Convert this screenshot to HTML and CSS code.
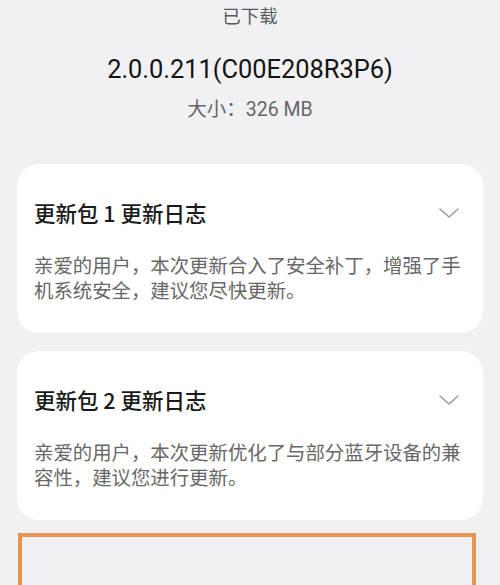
FILE: index.html
```html
<!DOCTYPE html>
<html lang="zh-CN">
<head>
<meta charset="utf-8">
<link rel="stylesheet" href="styles.css">
</head>
<body>
<div class="page">
  <div class="status">已下载</div>
  <div class="version">2.0.0.211(C00E208R3P6)</div>
  <div class="size">大小：326 MB</div>

  <div class="card">
    <div class="card-head">
      <span class="card-title">更新包 1 更新日志</span>
      <svg class="chev" width="20" height="10" viewBox="0 0 20 10"><path d="M1 1 L10 9 L19 1" fill="none" stroke="#9a9a9a" stroke-width="1.6" stroke-linecap="round" stroke-linejoin="round"/></svg>
    </div>
    <p class="card-body">亲爱的用户，本次更新合入了安全补丁，增强了手机系统安全，建议您尽快更新。</p>
  </div>

  <div class="card">
    <div class="card-head">
      <span class="card-title">更新包 2 更新日志</span>
      <svg class="chev" width="20" height="10" viewBox="0 0 20 10"><path d="M1 1 L10 9 L19 1" fill="none" stroke="#9a9a9a" stroke-width="1.6" stroke-linecap="round" stroke-linejoin="round"/></svg>
    </div>
    <p class="card-body">亲爱的用户，本次更新优化了与部分蓝牙设备的兼容性，建议您进行更新。</p>
  </div>

  <div class="highlight"></div>
</div>
</body>
</html>
```

FILE: styles.css
```css
html, body {
  margin: 0;
  padding: 0;
  background: #f1f1f3;
  height: 100%;
  overflow: hidden;
}
.page {
  font-family: "Roboto", "Noto Sans CJK SC", sans-serif;
  display: flex;
  flex-direction: column;
  align-items: center;
}
.status {
  font-family: "Noto Sans CJK SC", sans-serif;
  font-size: 18.5px;
  line-height: 30px;
  color: #5a5a5a;
}
.version {
  margin-top: 24px;
  font-size: 25.4px;
  line-height: 30px;
  color: #141414;
}
.size {
  margin-top: 13px;
  font-size: 19.5px;
  line-height: 26px;
  color: #666;
}
.card {
  box-sizing: border-box;
  width: 466px;
  margin-top: 41px;
  background: #fff;
  border-radius: 22px;
  padding: 34px 17px 31px 17px;
  align-self: flex-start;
  margin-left: 17px;
}
.card + .card {
  margin-top: 18px;
}
.card-head {
  display: flex;
  justify-content: space-between;
  align-items: center;
  height: 30px;
}
.card-title {
  font-family: "Noto Sans CJK SC", sans-serif;
  font-size: 21.5px;
  font-weight: 500;
  color: #1a1a1a;
  line-height: 30px;
}
.chev {
  margin-right: 7px;
  display: block;
}
.card-body {
  margin: 24px 0 0 0;
  font-family: "Noto Sans CJK SC", sans-serif;
  font-size: 19.4px;
  line-height: 25px;
  color: #676767;
}
.highlight {
  align-self: flex-start;
  margin-left: 18px;
  margin-top: 13px;
  width: 458px;
  height: 120px;
  box-sizing: border-box;
  border: 4.5px solid #e8944f;
  background: #f0f0f2;
}
```
